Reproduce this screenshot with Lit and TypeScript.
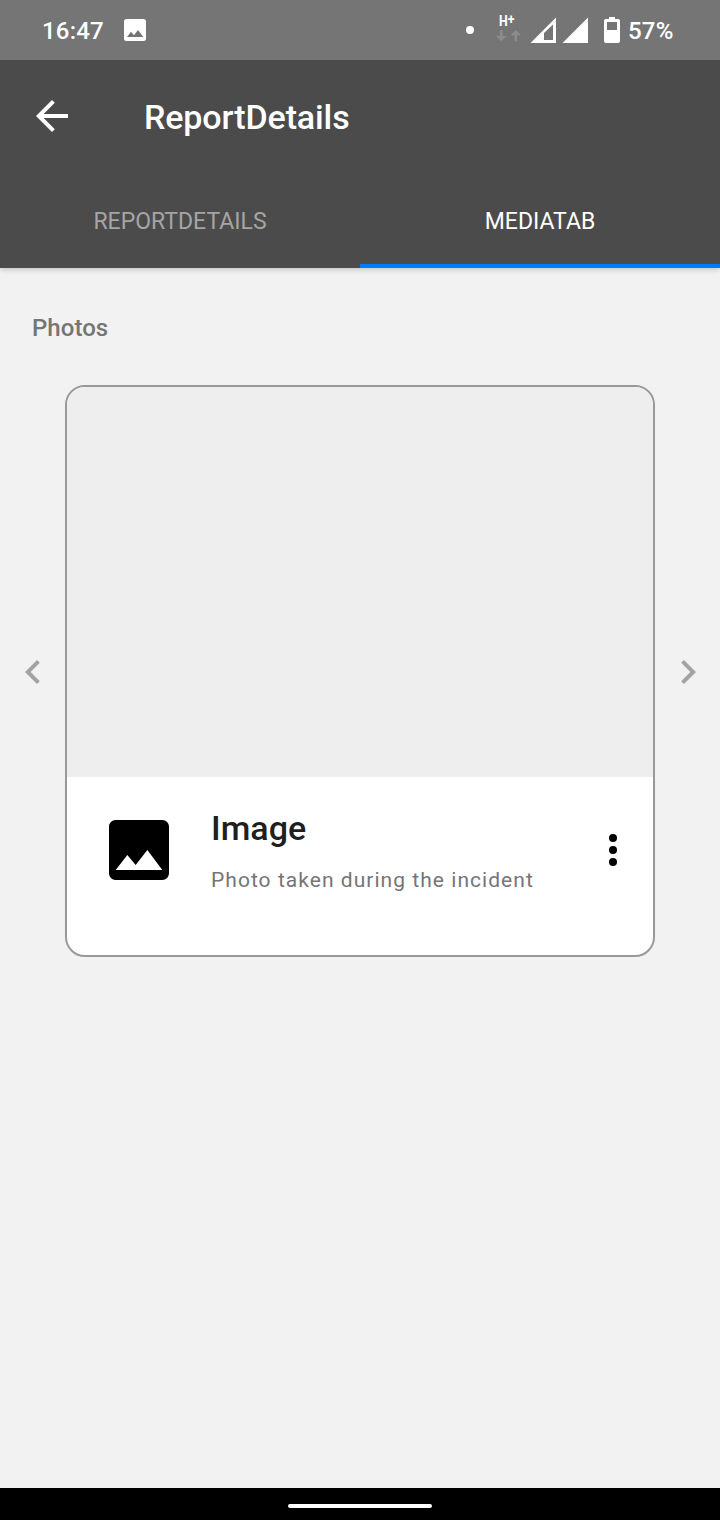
import { LitElement, html, css } from "lit";
import { customElement } from "lit/decorators.js";

@customElement("status-bar")
class StatusBar extends LitElement {
  static styles = css`
    :host {
      display: flex;
      align-items: center;
      height: 60px;
      box-sizing: border-box;
      padding: 0 47px 0 42px;
      background: #757575;
      color: #fff;
      font-weight: 500;
      font-size: 24px;
      line-height: 28px;
    }
    .time { width: 82px; letter-spacing: 0.2px; padding-top: 2px; }
    .icons { flex: 1; display: flex; justify-content: flex-end; }
    .battery { width: 45px; margin-left: 8px; padding-top: 2px; font-size: 24px; letter-spacing: 0.2px; white-space: nowrap; }
    .network { display: flex; flex-direction: column; width: 24px; margin-right: 10px; height: 32px; }
    .label {
      display: flex;
      height: 15px;
      margin-left: 3px;
      font-size: 15px;
      line-height: 15px;
      font-weight: 700;
      transform: scaleX(0.82);
      transform-origin: left;
    }
    .plus { font-size: 15px; line-height: 10px; }
    svg { display: block; }
    .dot { margin-right: 22px; }
  `;
  render() {
    return html`
      <span class="time">16:47</span>
      <svg width="22" height="22" viewBox="0 0 22 22">
        <rect width="22" height="22" rx="2.5" fill="#fff" />
        <path d="M3 18L7 12.8L10 16.2L14 11L19.3 18Z" fill="#757575" />
      </svg>
      <div class="icons">
        <svg class="dot" width="8" height="60" viewBox="0 0 8 60"><circle cx="4" cy="30" r="4" fill="#fff" /></svg>
      </div>
      <div class="network">
        <span class="label">H<span class="plus">+</span></span>
        <svg width="26" height="14" viewBox="0 0 26 14" fill="#8c8c8c">
          <path d="M4 1h2.500v6h4l-5.250 5.250L0 7h4zM18.500 12.250H21V6.250h4L19.750 1l-5.250 5.250h4z" />
        </svg>
      </div>
      <svg width="90" height="60" viewBox="0 0 90 60" fill="#fff">
        <path fill-rule="evenodd" d="M0.500 43L26 17.500V43ZM14 33V40H23V24.500Z" />
        <path d="M32.500 43L58 17.500V43Z" />
        <path fill-rule="evenodd" d="M79 17h6v2h3q2 0 2 2v20q0 2-2 2H76q-2 0-2-2V21q0-2 2-2h3zM77 22v8h10v-8z" />
      </svg>
      <span class="battery">57%</span>
    `;
  }
}

@customElement("app-header")
class AppHeader extends LitElement {
  static styles = css`
    :host {
      display: block;
      background: #4b4b4b;
      color: #fff;
      height: 208px;
      box-shadow: 0 1px 6px rgba(0, 0, 0, 0.24);
      clip-path: inset(0 0 -10px 0);
      position: relative;
    }
    .bar { display: flex; align-items: center; height: 112px; padding-left: 28px; }
    .title { margin-left: 68px; font-size: 34px; font-weight: 500; line-height: 40px; padding-top: 1px; letter-spacing: -0.12px; }
    .tabs { display: grid; grid-template-columns: 1fr 1fr; height: 96px; }
    .tab {
      display: flex;
      align-items: center;
      justify-content: center;
      font-size: 23px;
      color: #a5a5a5;
      border-bottom: 4px solid transparent;
      padding-top: 6px;
      box-sizing: border-box;
    }
    .active { color: #fff; border-bottom-color: #007aff; }
  `;
  render() {
    return html`
      <div class="bar">
        <svg width="48" height="48" viewBox="0 0 24 24" fill="#fff">
          <path d="M20 11H7.830l5.590-5.590L12 4l-8 8 8 8 1.410-1.410L7.830 13H20z" />
        </svg>
        <span class="title">ReportDetails</span>
      </div>
      <div class="tabs">
        <div class="tab">REPORTDETAILS</div>
        <div class="tab active">MEDIATAB</div>
      </div>
    `;
  }
}

@customElement("photo-card")
class PhotoCard extends LitElement {
  static styles = css`
    :host {
      display: flex;
      flex-direction: column;
      box-sizing: border-box;
      width: 590px;
      height: 572px;
      border: 2px solid #999;
      border-radius: 20px;
      overflow: hidden;
      background: #fff;
    }
    .photo { height: 390px; background: #eee; }
    .row { display: flex; align-items: center; height: 146px; padding: 0 16px 0 32px; }
    .text { flex: 1; margin-left: 32px; padding-top: 8px; }
    .title { font-size: 34px; line-height: 40px; font-weight: 500; color: #1f1f1f; letter-spacing: 0.05px; }
    .sub { font-size: 21px; line-height: 40px; color: #757575; letter-spacing: 1.04px; margin-top: 12px; white-space: nowrap; }
    svg { display: block; }
  `;
  render() {
    return html`
      <div class="photo"></div>
      <div class="row">
        <svg width="80" height="80" viewBox="0 0 24 24">
          <path d="M21 19V5c0-1.100-.9-2-2-2H5c-1.100 0-2 .9-2 2v14c0 1.100.9 2 2 2h14c1.100 0 2-.9 2-2zM8.500 13.500l2.500 3.010L14.500 12l4.500 6H5l3.500-4.500z" />
        </svg>
        <div class="text">
          <div class="title">Image</div>
          <div class="sub">Photo taken during the incident</div>
        </div>
        <svg width="48" height="48" viewBox="0 0 48 48">
          <circle cx="24" cy="12" r="4" /><circle cx="24" cy="24" r="4" /><circle cx="24" cy="36" r="4" />
        </svg>
      </div>
    `;
  }
}

@customElement("app-root")
class AppRoot extends LitElement {
  static styles = css`
    :host {
      display: flex;
      flex-direction: column;
      width: 720px;
      height: 1520px;
      background: #f2f2f2;
      font-family: Roboto, sans-serif;
      overflow: hidden;
    }
    .content { flex: 1; }
    .heading {
      padding: 44px 32px 0;
      font-size: 24px;
      line-height: 32px;
      font-weight: 500;
      letter-spacing: 0.05px;
      color: #757575;
    }
    .carousel {
      display: flex;
      align-items: center;
      padding-left: 9px;
      margin-top: 41px;
    }
    .chevron { padding-top: 2px; }
    .previous { margin-right: 8px; }
    .next { margin-left: 9px; }
    .nav { display: flex; align-items: center; justify-content: center; height: 32px; background: #000; }
    .pill { width: 144px; height: 4px; border-radius: 2px; background: #fff; margin-top: 4px; }
  `;
  render() {
    return html`
      <status-bar></status-bar>
      <app-header></app-header>
      <main class="content">
        <div class="heading">Photos</div>
        <div class="carousel">
          <svg class="chevron previous" width="48" height="48" viewBox="0 0 24 24" fill="#a3a3a3"><path d="M15.410 7.410L14 6l-6 6 6 6 1.410-1.410L10.830 12z" /></svg>
          <photo-card></photo-card>
          <svg class="chevron next" width="48" height="48" viewBox="0 0 24 24" fill="#a3a3a3"><path d="M10 6L8.590 7.410 13.170 12l-4.580 4.590L10 18l6-6z" /></svg>
        </div>
      </main>
      <div class="nav"><div class="pill"></div></div>
    `;
  }
}
